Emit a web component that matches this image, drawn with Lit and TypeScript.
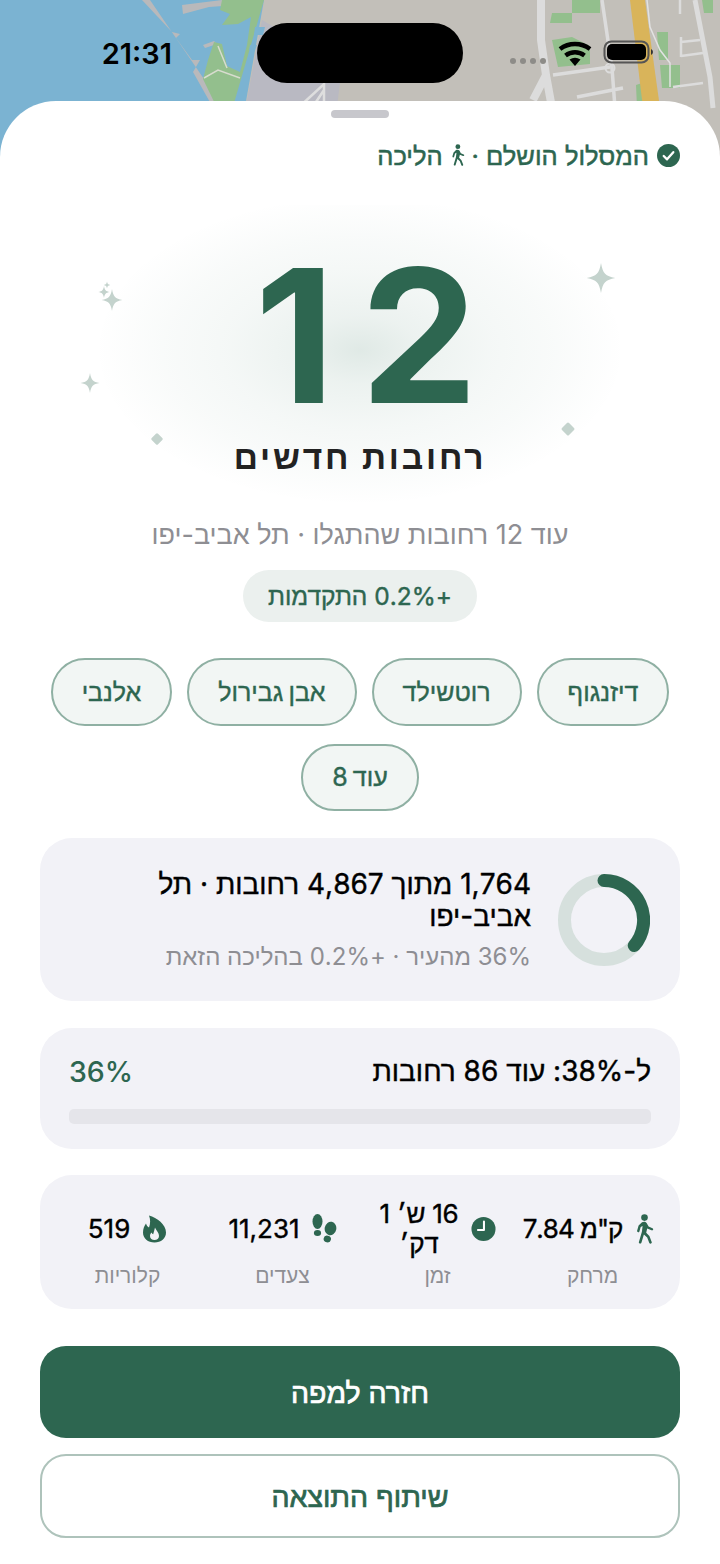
import { LitElement, html, css, svg } from "lit";
import { customElement } from "lit/decorators.js";

const star = (x: number, y: number, r: number) =>
  svg`<path d="M${x} ${y - r}C${x + r * 0.12} ${y - r * 0.3} ${x + r * 0.3} ${y - r * 0.12} ${x + r * 0.95} ${y}C${x + r * 0.3} ${y + r * 0.12} ${x + r * 0.12} ${y + r * 0.3} ${x} ${y + r}C${x - r * 0.12} ${y + r * 0.3} ${x - r * 0.3} ${y + r * 0.12} ${x - r * 0.95} ${y}C${x - r * 0.3} ${y - r * 0.12} ${x - r * 0.12} ${y - r * 0.3} ${x} ${y - r}Z"/>`;

const walk = (cls: string) => html`<svg class=${cls} viewBox="0 0 20 30" fill="currentColor" aria-hidden="true">
  <circle cx="10.5" cy="3.6" r="3.3"/>
  <path d="M8 8.2c1.600-.8 3.600-.7 4.600.7l2 3.600 3.900 1.700c1.400.7.5 2.700-1 2.100l-4.300-1.800-1 4.200 3.200 3.300 2.300 6.100c.5 1.500-1.800 2.300-2.400.8l-2.100-5.500-3.300-3-2.500 8.300c-.5 1.600-2.900.9-2.500-.6l3-10.300.7-5.700-1.900 1-1.300 4.300c-.5 1.500-2.600.9-2.300-.6l1.500-5.200z"/>
</svg>`;

@customElement("app-root")
export class AppRoot extends LitElement {
  static styles = css`
    :host {
      display: block;
      position: relative;
      width: 720px;
      height: 1564px;
      overflow: hidden;
      background: #fff;
      font-family: Inter, "Liberation Sans", sans-serif;
      color: #000;
    }
    .map {
      position: absolute;
      top: 0;
      left: 0;
      width: 720px;
      height: 180px;
      display: block;
    }
    .status {
      position: relative;
      display: grid;
      grid-template-columns: 257px 206px 257px;
      height: 101px;
      box-sizing: border-box;
      padding-top: 23px;
    }
    .time {
      height: 60px;
      display: flex;
      align-items: center;
      justify-content: flex-end;
      padding-right: 85px;
      font-size: 29px;
      font-weight: 600;
      line-height: 1;
      color: #000;
    }
    .island {
      height: 60px;
      border-radius: 30px;
      background: #000;
    }
    .status-icons {
      display: block;
      width: 257px;
      height: 60px;
    }
    .sheet {
      position: relative;
      box-sizing: border-box;
      height: 1463px;
      padding: 9px 40px 0;
      background: #fff;
      border-radius: 56px 56px 0 0;
      direction: rtl;
    }
    .handle {
      width: 58px;
      height: 8px;
      margin: 0 auto;
      border-radius: 4px;
      background: #c7c7cc;
    }
    .route {
      display: flex;
      align-items: center;
      gap: 8px;
      height: 30px;
      margin-top: 22px;
      font-size: 25.5px;
      font-weight: 400;
      -webkit-text-stroke: 0.5px currentColor;
      color: #2d6650;
      white-space: nowrap;
    }
    .check {
      width: 23px;
      height: 23px;
      flex: none;
    }
    .route-walk {
      width: 15px;
      height: 22px;
      margin: 0 -1px;
    }
    .hero {
      position: relative;
      height: 302px;
      margin: 35px -40px 0;
      display: flex;
      flex-direction: column;
      align-items: center;
      background: radial-gradient(
        ellipse 265px 155px at 50% 48%,
        rgba(45, 110, 85, 0.15) 0%,
        rgba(45, 110, 85, 0.09) 22%,
        rgba(45, 110, 85, 0.05) 50%,
        rgba(45, 110, 85, 0.03) 72%,
        rgba(45, 110, 85, 0) 100%
      );
    }
    .sparkles {
      position: absolute;
      left: 0;
      top: 0;
      width: 720px;
      height: 302px;
      fill: #c4d3cd;
    }
    .count {
      position: relative;
      margin-top: 61px;
      padding-left: 38px;
      font-size: 186px;
      line-height: 140px;
      font-weight: 700;
      letter-spacing: 25.5px;
      color: #2d6650;
      direction: ltr;
    }
    .new-label {
      position: relative;
      margin-top: 30px;
      font-size: 33.5px;
      line-height: 42px;
      font-weight: 700;
      letter-spacing: 2.8px;
      color: #222;
    }
    .subtitle {
      margin-top: 11px;
      text-align: center;
      font-size: 27px;
      line-height: 34px;
      color: #8e8e93;
    }
    .pill-row {
      display: flex;
      justify-content: center;
      margin-top: 18px;
    }
    .pill {
      height: 52px;
      padding: 0 25px;
      display: flex;
      align-items: center;
      border-radius: 26px;
      background: #ebf0ee;
      color: #2d6650;
      font-size: 24.5px;
      font-weight: 400;
      -webkit-text-stroke: 0.4px currentColor;
    }
    .chips {
      display: flex;
      flex-wrap: wrap;
      justify-content: center;
      gap: 18px 15px;
      margin: 36px -10px 0;
    }
    .chip {
      height: 67.5px;
      box-sizing: border-box;
      padding: 0 29px;
      display: flex;
      align-items: center;
      border: 2px solid #8fb0a3;
      border-radius: 34px;
      background: #f2f6f4;
      color: #2d6650;
      font-size: 25px;
      font-weight: 400;
      word-spacing: -2px;
      -webkit-text-stroke: 0.4px currentColor;
    }
    .card {
      background: #f2f2f7;
      border-radius: 32px;
    }
    .summary {
      margin-top: 27px;
      height: 163px;
      box-sizing: border-box;
      padding: 0 30px 0 40px;
      display: flex;
      align-items: center;
      gap: 27px;
    }
    .ring {
      width: 92px;
      height: 92px;
      flex: none;
    }
    .summary-title {
      font-size: 28px;
      line-height: 32px;
      font-weight: 400;
      -webkit-text-stroke: 0.4px currentColor;
      color: #000;
    }
    .summary-sub {
      margin-top: 9px;
      font-size: 24px;
      line-height: 31px;
      color: #8e8e93;
    }
    .goal {
      margin-top: 27px;
      height: 121px;
      box-sizing: border-box;
      padding: 26px 29px 0;
    }
    .goal-top {
      display: flex;
      justify-content: space-between;
      align-items: center;
      height: 34px;
    }
    .goal-text {
      font-size: 28px;
      font-weight: 400;
      -webkit-text-stroke: 0.4px currentColor;
    }
    .goal-pct {
      font-size: 28.5px;
      font-weight: 500;
      color: #2d6650;
    }
    .bar {
      margin-top: 21px;
      height: 15px;
      border-radius: 5px;
      background: #e5e5ea;
    }
    .stats {
      margin-top: 26px;
      height: 134px;
      box-sizing: border-box;
      padding: 24px 10px 0;
      display: grid;
      grid-template-columns: repeat(4, 1fr);
    }
    .stat {
      display: flex;
      flex-direction: column;
      align-items: center;
    }
    .stat-value {
      display: flex;
      align-items: center;
      justify-content: center;
      gap: 12px;
      height: 60px;
      font-size: 26px;
      line-height: 30px;
      font-weight: 400;
      -webkit-text-stroke: 0.4px currentColor;
      text-align: center;
    }
    .stat-value.first {
      margin-inline-start: 8px;
    }
    .stat-text {
      max-width: 80px;
      letter-spacing: -0.3px;
    }
    .stat-text.nowrap {
      max-width: none;
      white-space: nowrap;
      letter-spacing: 0;
    }
    .stat-text.tight {
      letter-spacing: -1px;
    }
    .stat-icon {
      width: 25px;
      height: 32px;
      flex: none;
      color: #2d6650;
    }
    .stat-walk {
      width: 20px;
      height: 30px;
      flex: none;
      color: #2d6650;
    }
    .stat-label {
      margin-top: 4px;
      font-size: 21px;
      line-height: 26px;
      color: #8e8e93;
    }
    .btn {
      width: 100%;
      box-sizing: border-box;
      display: flex;
      align-items: center;
      justify-content: center;
      font-family: inherit;
      font-size: 28.5px;
      font-weight: 400;
      -webkit-text-stroke: 0.7px currentColor;
      border-radius: 26px;
    }
    .primary {
      margin-top: 37px;
      height: 92px;
      border: 0;
      background: #2d6650;
      color: #fff;
    }
    .secondary {
      margin-top: 16px;
      height: 84px;
      border: 2px solid #aec3bb;
      background: #fff;
      color: #2d6650;
    }
  `;

  render() {
    return html`
      <svg class="map" viewBox="0 0 720 180" aria-hidden="true">
        <rect width="720" height="180" fill="#7bb3d2"/>
        <path d="M264 0H720V180H232Z" fill="#c2bfb9"/>
        <path d="M262 20 342 66 328 180H232Z" fill="#b9b9c2"/>
        <path d="M142 0H150L221 104H211L193 72 200 60 192 60 176 38 180 34 172 32Z" fill="#b9b9bb"/>
        <path d="M203 45l11-4 3 3-12 4zM182 5l40-5 1 6-14 1-26 7z" fill="#b9b9bb"/>
        <path d="M222 0 220 10 230 14 222 25 238 24 251 17 247 45 240 72 227 66 222 44 214 42 208 60 203 79 218 110H232L264 0Z" fill="#93bf8d"/>
        <path d="M204 78l14-8 22 8M218 46l9 22" fill="none" stroke="#d8dccf" stroke-width="1.500"/>
        <path d="M255 27h10l-2 8h-9zM250 45h7l-2 5h-6z" fill="#7bb3d2"/>
        <path d="M298 108l26-24v24M312 108l12-18" fill="none" stroke="#dedede" stroke-width="2.500"/>
        <path d="M552 13H572V0H600V13H572V23H550ZM552 40 572 37 590 46V64L558 67Z" fill="#93bf8d"/>
        <path d="M657 32h11v28h-9zM660 65h20v23h-18zM636 85l6-2 3 25h-8ZM702 0H713V13H704Z" fill="#93bf8d"/>
        <path d="M541 0V40L546 75 552 108M546 75 533 100" fill="none" stroke="#dcdcdc" stroke-width="8"/>
        <path d="M602 0 612 68 615 108M553 75 610 67M577 97 623 88" fill="none" stroke="#dcdcdc" stroke-width="3.500"/>
        <circle cx="610" cy="68" r="4.500" fill="none" stroke="#dcdcdc" stroke-width="2"/>
        <path d="M630 0H645L660 108H643Z" fill="#d9b45a"/>
        <path d="M647 0 650 27 660 50 670 63V87" fill="none" stroke="#e2e2e2" stroke-width="1.500"/>
        <path d="M681 37V57M681 42 700 40M681 56 703 53M673 87 703 83M680 0V14" fill="none" stroke="#dcdcdc" stroke-width="2.500"/>
        <path d="M695 0 710 77 713 108" fill="none" stroke="#dcdcdc" stroke-width="5"/>
      </svg>

      <div class="status">
        <div class="time">21:31</div>
        <div class="island"></div>
        <svg class="status-icons" viewBox="0 0 257 60" aria-hidden="true">
          <g fill="#8d8c88"><circle cx="50" cy="38" r="3"/><circle cx="60" cy="38" r="3"/><circle cx="70" cy="38" r="3"/><circle cx="80" cy="38" r="3"/></g>
          <g fill="none" stroke="#000" stroke-width="4.500">
            <path d="M97 26a25 25 0 0 1 30 0"/>
            <path d="M102.500 32.500a16 16 0 0 1 19 0"/>
          </g>
          <path d="M106.500 36.500a10 10 0 0 1 11 0L112 43Z" fill="#000"/>
          <rect x="141.500" y="18.500" width="44" height="21" rx="7" fill="none" stroke="#555" stroke-width="2"/>
          <rect x="144" y="21" width="39" height="16" rx="5" fill="#000"/>
          <path d="M188 26v6q2-1 2-3t-2-3Z" fill="#333"/>
        </svg>
      </div>

      <div class="sheet">
        <div class="handle"></div>
        <div class="route">
          <svg class="check" viewBox="0 0 24 24" aria-hidden="true">
            <circle cx="12" cy="12" r="12" fill="#2d6650"/>
            <path d="M7 12.500l3.500 3.500 6.500-7.500" fill="none" stroke="#fff" stroke-width="2.400" stroke-linecap="round" stroke-linejoin="round"/>
          </svg>
          <span>המסלול הושלם ·</span>
          ${walk("route-walk")}
          <span>הליכה</span>
        </div>

        <div class="hero">
          <svg class="sparkles" viewBox="0 0 720 302" aria-hidden="true">
            ${star(601, 73, 15)}
            ${star(112, 95, 11)}
            ${star(104, 87, 6)}
            ${star(107, 80, 3.5)}
            ${star(90, 178, 10)}
            <rect x="152.500" y="229.500" width="9" height="9" rx="1.500" transform="rotate(45 157 234)"/>
            <rect x="563" y="219" width="10" height="10" rx="1.500" transform="rotate(45 568 224)"/>
          </svg>
          <div class="count">12</div>
          <div class="new-label">רחובות חדשים</div>
        </div>

        <div class="subtitle">עוד 12 רחובות שהתגלו · תל אביב-יפו</div>
        <div class="pill-row"><div class="pill">+0.2% התקדמות</div></div>

        <div class="chips">
          <div class="chip">דיזנגוף</div>
          <div class="chip">רוטשילד</div>
          <div class="chip">אבן גבירול</div>
          <div class="chip">אלנבי</div>
          <div class="chip">עוד 8</div>
        </div>

        <div class="card summary">
          <svg class="ring" viewBox="0 0 92 92" aria-hidden="true">
            <circle cx="46" cy="46" r="39.500" fill="none" stroke="#d6e0dd" stroke-width="13"/>
            <path d="M46 6.500A39.500 39.500 0 0 1 76.200 71.600" fill="none" stroke="#2d6650" stroke-width="13" stroke-linecap="round"/>
          </svg>
          <div>
            <div class="summary-title">1,764 מתוך 4,867 רחובות · תל אביב-יפו</div>
            <div class="summary-sub">36% מהעיר · +0.2% בהליכה הזאת</div>
          </div>
        </div>

        <div class="card goal">
          <div class="goal-top">
            <div class="goal-text">ל-38%: עוד 86 רחובות</div>
            <div class="goal-pct">36%</div>
          </div>
          <div class="bar"></div>
        </div>

        <div class="card stats">
          <div class="stat">
            <div class="stat-value first">
              ${walk("stat-walk")}
              <span class="stat-text nowrap tight">ק"מ 7.84</span>
            </div>
            <div class="stat-label">מרחק</div>
          </div>
          <div class="stat">
            <div class="stat-value">
              <svg class="stat-icon" viewBox="0 0 27 32" aria-hidden="true">
                <circle cx="13.500" cy="16" r="13" fill="#2d6650"/>
                <path d="M14 8v9H7.500" fill="none" stroke="#fff" stroke-width="2.200" stroke-linecap="round" stroke-linejoin="round"/>
              </svg>
              <span class="stat-text">16 ש׳ 1 דק׳</span>
            </div>
            <div class="stat-label">זמן</div>
          </div>
          <div class="stat">
            <div class="stat-value">
              <svg class="stat-icon" viewBox="0 -1 25 32" fill="#2d6650" aria-hidden="true">
                <ellipse cx="5.500" cy="7.500" rx="5" ry="7.500"/>
                <ellipse cx="5.500" cy="19" rx="3.600" ry="3"/>
                <ellipse cx="18.500" cy="14.500" rx="5.800" ry="6.800" transform="rotate(12 18.500 14.500)"/>
                <ellipse cx="15.300" cy="25" rx="3.700" ry="3.300" transform="rotate(12 15.300 25)"/>
              </svg>
              <span class="stat-text nowrap">11,231</span>
            </div>
            <div class="stat-label">צעדים</div>
          </div>
          <div class="stat">
            <div class="stat-value">
              <svg class="stat-icon" viewBox="-1 -2.500 25 32" aria-hidden="true">
                <path fill="#2d6650" fill-rule="evenodd" d="M6 0C14 2 23 9 23 17C23 23 18 27 11.500 27C5 27 0 23 0 17C0 13 1.500 10 3 8C3.500 10 4.500 11 6 12C7.500 8 7.500 4 6 0ZM12 12C13 15 16 17 16 20.500C16 23 14 24.500 11.500 24.500C9 24.500 7 23 7 20.500C7 19 7.700 18 8.500 17C9 18 9.500 18.500 10.200 18.800C10.800 16.500 11.500 14.500 12 12Z"/>
              </svg>
              <span class="stat-text nowrap">519</span>
            </div>
            <div class="stat-label">קלוריות</div>
          </div>
        </div>

        <button class="btn primary">חזרה למפה</button>
        <button class="btn secondary">שיתוף התוצאה</button>
      </div>
    `;
  }
}
